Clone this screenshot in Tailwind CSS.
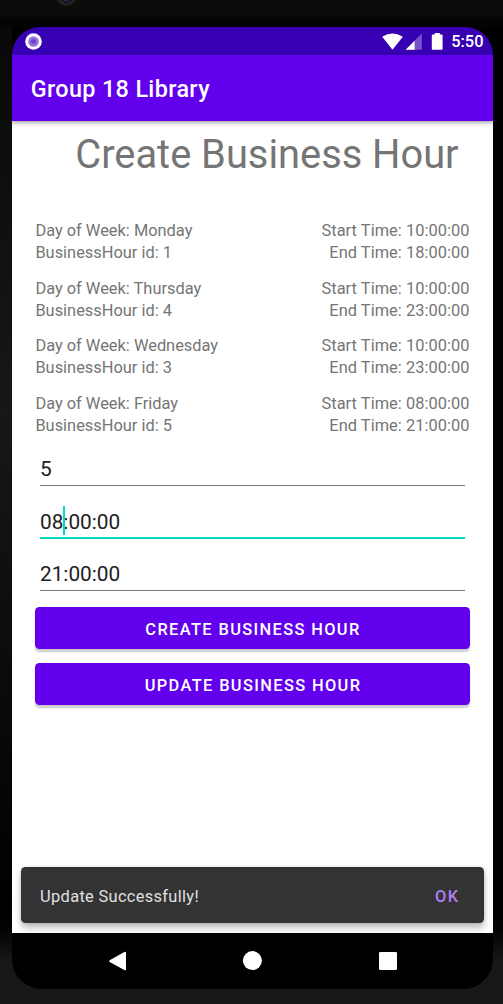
<!DOCTYPE html>
<html lang="en">
<head>
<meta charset="utf-8">
<title>Group 18 Library</title>
<script src="https://cdn.jsdelivr.net/npm/@tailwindcss/browser@4"></script>
</head>
<body class="h-[1004px] w-[503px] overflow-hidden bg-black font-[Roboto,sans-serif]">
<div class="flex h-[1004px] w-[503px] flex-col bg-black">
  <!-- Top bezel with camera -->
  <div class="flex h-[27px] shrink-0 items-start bg-linear-to-b from-[#0d0d0d] from-0% via-[#0a0a0a] via-55% to-[#040404] to-70% pl-[56px]">
    <svg class="h-[7px] w-[21px]" viewBox="0 0 21 7"><circle cx="10.5" cy="-4" r="10" fill="#222223"/><circle cx="10.5" cy="-4" r="7" fill="#151519"/><circle cx="10" cy="-2" r="3.2" fill="#29295a"/></svg>
  </div>
  <div class="flex h-[962px] shrink-0 bg-linear-to-b from-black from-90% to-[#171717] to-97%">
    <div class="h-[962px] w-3 shrink-0 bg-linear-to-b from-[#090909] from-0% via-[#171717] via-40% to-transparent to-92%"></div>
    <!-- Screen -->
    <div class="flex w-[481px] shrink-0 flex-col overflow-hidden rounded-t-[28px] rounded-b-[30px]">
      <div class="flex h-7 shrink-0 items-center bg-[#3700b3] pl-[12.5px] pr-[9.5px]">
        <svg class="h-[17px] w-[17px]" viewBox="0 0 17 17"><circle cx="8.5" cy="8.5" r="8.3" fill="#fff"/><circle cx="8.5" cy="8.5" r="5.3" fill="#9773d8"/><circle cx="8.5" cy="8.5" r="2.5" fill="#7042cb"/></svg>
        <svg class="ml-auto h-[17px] w-[61px]" viewBox="0 0 61 17">
          <path d="M.2 3.8Q10.5-3 20.8 3.8L10.5 16.8Z" fill="#fff"/>
          <path d="M39.8.6V16.8H23.6Z" fill="#fff" fill-opacity=".33"/><path d="M32.6 7.8V16.8H23.6Z" fill="#fff"/>
          <path d="M52.8 0h5v1.5h1.8q1 0 1 1V16q0 .8-.8.8H50.6q-.8 0-.8-.8V2.5q0-1 1-1h2Z" fill="#fff"/>
        </svg>
        <span class="ml-2 pt-[2px] text-[16.4px] font-medium leading-[26px] text-white">5:50</span>
      </div>
      <div class="relative flex h-[65.5px] shrink-0 items-center bg-[#6200ee] pl-[18.7px] pt-[2px] shadow-[0_2px_4px_rgba(0,0,0,0.35)]">
        <h1 class="text-[23.4px] font-medium leading-7 tracking-[0.35px] text-white">Group 18 Library</h1>
      </div>
      <div class="flex grow flex-col bg-white">
        <main class="flex grow flex-col px-[23.4px]">
          <h2 class="mt-[11.5px] h-[46px] whitespace-nowrap pr-[11px] text-right text-[39.8px] leading-[46px] text-[#757575]">Create Business Hour</h2>
          <div class="mt-[42px] flex flex-col gap-[13.5px] text-[16.4px] leading-[22px] text-[#757575]">
            <div class="flex h-11 justify-between"><p>Day of Week: Monday<br>BusinessHour id: 1</p><p class="text-right tracking-[0.05px]">Start Time: 10:00:00<br>End Time: 18:00:00</p></div>
            <div class="flex h-11 justify-between"><p>Day of Week: Thursday<br>BusinessHour id: 4</p><p class="text-right tracking-[0.05px]">Start Time: 10:00:00<br>End Time: 23:00:00</p></div>
            <div class="flex h-11 justify-between"><p>Day of Week: Wednesday<br>BusinessHour id: 3</p><p class="text-right tracking-[0.05px]">Start Time: 10:00:00<br>End Time: 23:00:00</p></div>
            <div class="flex h-11 justify-between"><p>Day of Week: Friday<br>BusinessHour id: 5</p><p class="text-right tracking-[0.05px]">Start Time: 08:00:00<br>End Time: 21:00:00</p></div>
          </div>
          <div class="mx-[4.6px] mt-[15px] flex flex-col text-[20.8px] leading-7 text-[#212121]">
            <div class="flex h-[34px] items-start border-b border-[#757575] pt-[3px]">5</div>
            <div class="relative mt-[18px] flex h-[35px] items-start border-b-2 border-[#03dac5] pt-[4px]">08:00:00<i class="absolute left-[23px] top-[2px] h-[29px] w-[2px] bg-[#03dac5]"></i></div>
            <div class="mt-[18px] flex h-[34px] items-start border-b border-[#757575] pt-[3px]">21:00:00</div>
          </div>
          <div class="mt-4 flex flex-col gap-[14px]">
            <button class="h-[42px] rounded-[4.5px] bg-[#6200ee] pl-[1px] pt-[5px] text-[16.4px] font-medium tracking-[1.37px] text-white shadow-[0_3px_2px_rgba(0,0,0,0.2)]">CREATE BUSINESS HOUR</button>
            <button class="h-[42px] rounded-[4.5px] bg-[#6200ee] pl-[1px] pt-[5px] text-[16.4px] font-medium tracking-[1.37px] text-white shadow-[0_3px_2px_rgba(0,0,0,0.2)]">UPDATE BUSINESS HOUR</button>
          </div>
        </main>
        <!-- Snackbar -->
        <div class="mx-[9.4px] mb-[9.6px] flex h-[56px] shrink-0 items-center justify-between rounded-[4.5px] bg-[#333] pl-[18.7px] pr-[24px] pt-[3px] shadow-[0_5px_7px_rgba(0,0,0,0.26),0_0_3px_rgba(0,0,0,0.15)]">
          <span class="text-[16.4px] tracking-[0.33px] text-[#e0e0e0]">Update Successfully!</span>
          <span class="text-[16.4px] font-medium tracking-[1.46px] text-[#b17ff5]">OK</span>
        </div>
      </div>
      <nav class="relative h-[56px] shrink-0 bg-black">
        <svg class="h-[56px] w-[481px]" viewBox="0 0 481 56" fill="#fff"><path d="M97.7 27.2 112.3 19q1.7-.8 1.7.8v16.4q0 1.7-1.7.9L97.7 29q-1.4-.9 0-1.8Z"/><circle cx="240.4" cy="27.6" r="9.5"/><rect x="367" y="19" width="18" height="18" rx="1.2"/></svg>
      </nav>
    </div>
  </div>
  <div class="h-[15px] shrink-0 bg-[#171717]"></div>
</div>
</body>
</html>
